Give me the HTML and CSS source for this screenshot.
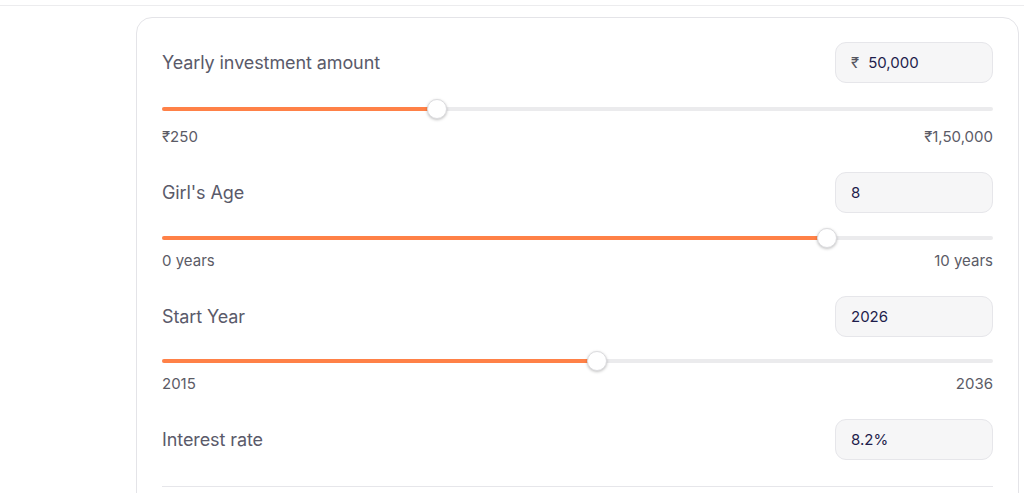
FILE: index.html
```html
<!DOCTYPE html>
<html lang="en">
<head>
<meta charset="utf-8">
<title>SSY Calculator</title>
<link rel="stylesheet" href="styles.css">
</head>
<body>
<div class="topbar"></div>
<main class="wrap">
  <section class="card">
    <div class="field">
      <div class="field-head">
        <span class="field-label">Yearly investment amount</span>
        <div class="value-box"><span class="prefix">₹</span><span class="value">50,000</span></div>
      </div>
      <div class="slider slider--first"><div class="fill" style="width:33.1%"></div><div class="thumb" style="left:33.1%"></div></div>
      <div class="range range--first"><span>₹250</span><span>₹1,50,000</span></div>
    </div>
    <div class="field">
      <div class="field-head">
        <span class="field-label">Girl's Age</span>
        <div class="value-box"><span class="value">8</span></div>
      </div>
      <div class="slider"><div class="fill" style="width:80%"></div><div class="thumb" style="left:80%"></div></div>
      <div class="range"><span>0 years</span><span>10 years</span></div>
    </div>
    <div class="field">
      <div class="field-head">
        <span class="field-label">Start Year</span>
        <div class="value-box"><span class="value">2026</span></div>
      </div>
      <div class="slider slider--tight"><div class="fill" style="width:52.4%"></div><div class="thumb" style="left:52.4%"></div></div>
      <div class="range"><span>2015</span><span>2036</span></div>
    </div>
    <div class="field field--last">
      <div class="field-head">
        <span class="field-label">Interest rate</span>
        <div class="value-box"><span class="value">8.2%</span></div>
      </div>
    </div>
    <div class="divider"></div>
  </section>
</main>
</body>
</html>
```
FILE: styles.css
```css
* { box-sizing: border-box; }
html, body { margin: 0; padding: 0; background: #fff; }
body {
  font-family: Inter, "Noto Sans", "DejaVu Sans", sans-serif;
  color: #5c5c6b;
  height: 493px;
  overflow: hidden;
}
.topbar {
  height: 6px;
  border-bottom: 1px solid #ececee;
}
.wrap {
  padding: 11px 5px 0 136px;
}
.card {
  border: 1px solid #e4e4e8;
  border-radius: 16px;
  padding: 24px 25px 0 25px;
  height: 520px;
}
.field { margin-bottom: 27px; }
.field--last { margin-bottom: 26px; }
.field-head {
  display: flex;
  justify-content: space-between;
  align-items: center;
}
.field-label {
  font-size: 18px;
  letter-spacing: -0.1px;
  color: #5a5a6a;
}
.value-box {
  width: 158px;
  height: 41px;
  background: #f6f6f7;
  border: 1px solid #e6e6ea;
  border-radius: 11px;
  display: flex;
  align-items: center;
  padding-left: 15px;
  font-size: 15px;
  font-weight: 400;
  color: #1e1d4c;
}
.prefix {
  color: #555560;
  font-weight: 400;
  margin-right: 9px;
}
.slider {
  position: relative;
  margin-top: 15px;
  height: 20px;
}
.slider--first { margin-top: 16px; }
.slider--tight { margin-top: 14px; }
.slider::before {
  content: "";
  position: absolute;
  left: 0; right: 0; top: 8px;
  height: 4px;
  border-radius: 2px;
  background: #ebebed;
}
.fill {
  position: absolute;
  left: 0; top: 8px;
  height: 4px;
  border-radius: 2px;
  background: #ff8147;
}
.thumb {
  position: absolute;
  top: 0;
  width: 20px;
  height: 20px;
  margin-left: -10px;
  border-radius: 50%;
  background: #fff;
  border: 1px solid #dcdcdf;
  box-shadow: 0 1px 3px rgba(0,0,0,0.25);
}
.range {
  display: flex;
  justify-content: space-between;
  margin-top: 5px;
  font-size: 15px;
  line-height: 16px;
  color: #5b5b66;
}
.range--first { margin-top: 10px; }
.divider {
  border-top: 1px solid #e6e6ea;
}
```
